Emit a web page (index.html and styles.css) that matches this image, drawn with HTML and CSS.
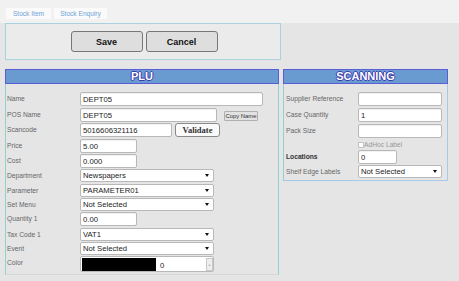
FILE: index.html
```html
<!DOCTYPE html>
<html lang="en">
<head>
  <meta charset="UTF-8">
  <title>Stock Item</title>
  <link rel="stylesheet" href="styles.css">
</head>
<body>
  <div class="tabs">
    <a class="tab tab-item">Stock Item</a>
    <a class="tab tab-enquiry">Stock Enquiry</a>
  </div>

  <div class="main">
    <div class="actions">
      <button class="btn">Save</button>
      <button class="btn">Cancel</button>
    </div>

    <div class="panels">
      <div class="panel plu">
        <h2>PLU</h2>
        <div class="row tall">
          <label>Name</label>
          <input class="field w-name" value="DEPT05">
        </div>
        <div class="row">
          <label>POS Name</label>
          <input class="field w-pos" value="DEPT05">
          <button class="copy-btn">Copy Name</button>
        </div>
        <div class="row tall">
          <label>Scancode</label>
          <input class="field w-scan" value="5016606321116">
          <button class="validate-btn">Validate</button>
        </div>
        <div class="row">
          <label>Price</label>
          <input class="field w-small" value="5.00">
        </div>
        <div class="row">
          <label>Cost</label>
          <input class="field w-small" value="0.000">
        </div>
        <div class="row">
          <label>Department</label>
          <span class="sel w-sel"><select><option>Newspapers</option></select></span>
        </div>
        <div class="row short">
          <label>Parameter</label>
          <span class="sel w-sel"><select><option>PARAMETER01</option></select></span>
        </div>
        <div class="row short">
          <label>Set Menu</label>
          <span class="sel w-sel"><select><option>Not Selected</option></select></span>
        </div>
        <div class="row tall">
          <label>Quantity 1</label>
          <input class="field w-small" value="0.00">
        </div>
        <div class="row short">
          <label>Tax Code 1</label>
          <span class="sel w-sel"><select><option>VAT1</option></select></span>
        </div>
        <div class="row short">
          <label>Event</label>
          <span class="sel w-sel"><select><option>Not Selected</option></select></span>
        </div>
        <div class="row tall">
          <label>Color</label>
          <div class="color-box">
            <span class="swatch"></span>
            <span class="color-val">0</span>
            <span class="spin">&#8964;</span>
          </div>
        </div>
      </div>

      <div class="panel scanning">
        <h2>SCANNING</h2>
        <div class="row tall">
          <label>Supplier Reference</label>
          <input class="field w-scn" value="">
        </div>
        <div class="row tall">
          <label>Case Quantity</label>
          <input class="field w-scn" value="1">
        </div>
        <div class="row">
          <label>Pack Size</label>
          <input class="field w-scn" value="">
        </div>
        <div class="row check-row">
          <label></label>
          <input type="checkbox" class="check">
          <span class="check-text">AdHoc Label</span>
        </div>
        <div class="row">
          <label class="strong">Locations</label>
          <input class="field w-loc" value="0">
        </div>
        <div class="row short">
          <label>Shelf Edge Labels</label>
          <span class="sel w-scn"><select><option>Not Selected</option></select></span>
        </div>
      </div>
    </div>
  </div>
</body>
</html>
```

FILE: styles.css
```css
body {
  margin: 0;
  background: #e5e5e5;
  font-family: "Liberation Sans", Arial, sans-serif;
  color: #222;
}
.tabs {
  height: 23px;
  box-sizing: border-box;
  background: #f1f1f1;
  padding: 8px 0 0 6px;
  display: flex;
  gap: 3px;
}
.tab {
  height: 11px;
  background: #fafafa;
  color: #6fa3d8;
  font-size: 6.6px;
  display: flex;
  align-items: center;
  justify-content: center;
}
.tab-item {
  width: 45px;
}
.tab-enquiry {
  width: 53px;
}
.main {
  padding: 0 5px;
}
.actions {
  width: 276px;
  height: 37px;
  box-sizing: border-box;
  border: 1px solid #a9d2de;
  background: #ebebeb;
  display: flex;
  justify-content: center;
  align-items: flex-start;
  gap: 3px;
  padding: 7px 0 0 2px;
}
.btn {
  width: 72px;
  height: 21px;
  border: 1px solid #777;
  border-radius: 3px;
  background: #dedede;
  font-family: "Liberation Sans", Arial, sans-serif;
  font-weight: bold;
  font-size: 9px;
  color: #111;
  padding: 0;
}
.panels {
  display: flex;
  gap: 4px;
  margin-top: 9px;
  align-items: flex-start;
}
.panel {
  box-sizing: border-box;
  border: 1px solid #93d0d0;
  border-top: 0;
  border-bottom-color: #d4d8d8;
  padding-bottom: 2px;
}
.panel h2 {
  margin: 0 -1px 8px;
  height: 15px;
  box-sizing: border-box;
  border: 1px solid #5c5cd4;
  background: #6a9bd0;
  color: #fff;
  font-size: 11px;
  font-weight: bold;
  line-height: 13px;
  text-align: center;
  text-shadow: 1px 0 0 #3b3bb0, -1px 0 0 #3b3bb0, 0 1px 0 #3b3bb0, 0 -1px 0 #3b3bb0;
}
.plu {
  width: 274px;
}
.scanning {
  width: 165px;
  border-right-color: #a8c8e8;
  border-bottom-color: #a8c8e8;
  padding-bottom: 1px;
}
.row {
  display: flex;
  align-items: flex-start;
  height: 15px;
}
.row.tall {
  height: 16px;
}
.row.short {
  height: 14px;
}
.row label {
  width: 74px;
  flex: none;
  box-sizing: border-box;
  padding-left: 1px;
  font-size: 6.7px;
  line-height: 14px;
  color: #666;
}
.scanning .row label {
  padding-left: 2px;
}
.row label.strong {
  font-weight: bold;
  color: #333;
}
.field {
  height: 14px;
  box-sizing: border-box;
  border: 1px solid #b8b8b8;
  border-radius: 2px;
  background: #fff;
  font-family: "Liberation Sans", Arial, sans-serif;
  font-size: 7.7px;
  color: #222;
  padding: 0 2px;
  margin: 0;
  box-shadow: inset 0 1px 1px rgba(0, 0, 0, 0.06);
}
.w-name {
  width: 183px;
}
.w-pos {
  width: 137px;
}
.w-scan {
  width: 92px;
}
.w-small {
  width: 57px;
}
.w-sel {
  width: 134px;
}
.w-scn {
  width: 84px;
}
.w-loc {
  width: 39px;
}
.copy-btn {
  margin: 3px 0 0 7px;
  width: 34px;
  height: 10px;
  padding: 0;
  border: 1px solid #b0b0b0;
  border-radius: 1px;
  background: #e2e2e2;
  font-family: "Liberation Sans", Arial, sans-serif;
  font-size: 5.9px;
  color: #333;
}
.validate-btn {
  margin-left: 3px;
  width: 45px;
  height: 14px;
  padding: 0;
  border: 1px solid #8a8a8a;
  border-radius: 3px;
  background: #fafafa;
  font-family: "Liberation Serif", "Times New Roman", serif;
  font-weight: bold;
  font-size: 8.5px;
  color: #333;
}
.sel {
  position: relative;
  display: block;
  height: 13px;
}
.sel select {
  appearance: none;
  display: block;
  width: 100%;
  height: 13px;
  box-sizing: border-box;
  border: 1px solid #b8b8b8;
  border-radius: 2px;
  background: #fff;
  font-family: "Liberation Sans", Arial, sans-serif;
  font-size: 7.7px;
  line-height: 11px;
  color: #222;
  padding: 0 2px;
  margin: 0;
}
.sel::after {
  content: "";
  position: absolute;
  right: 5px;
  top: 5px;
  border-left: 2px solid transparent;
  border-right: 2px solid transparent;
  border-top: 3px solid #111;
}
.color-box {
  width: 134px;
  height: 16px;
  box-sizing: border-box;
  border: 1px solid #b8b8b8;
  border-radius: 2px;
  background: #fff;
  padding: 1px 0 0 1px;
  display: flex;
  align-items: flex-start;
}
.swatch {
  width: 74px;
  height: 13px;
  background: #000;
  flex: none;
}
.color-val {
  flex: 1;
  margin-left: 4px;
  font-size: 7.7px;
  line-height: 15px;
}
.spin {
  width: 7px;
  height: 13px;
  box-sizing: border-box;
  border: 1px solid #c8c8c8;
  background: #eee;
  color: #999;
  font-size: 6px;
  line-height: 11px;
  text-align: center;
}
.check-row {
  height: 11px;
  align-items: center;
}
.check {
  appearance: none;
  width: 6px;
  height: 6px;
  margin: 0;
  border: 1px solid #c4c4c4;
  background: #fff;
}
.check-text {
  font-size: 6.7px;
  color: #999;
}
```
